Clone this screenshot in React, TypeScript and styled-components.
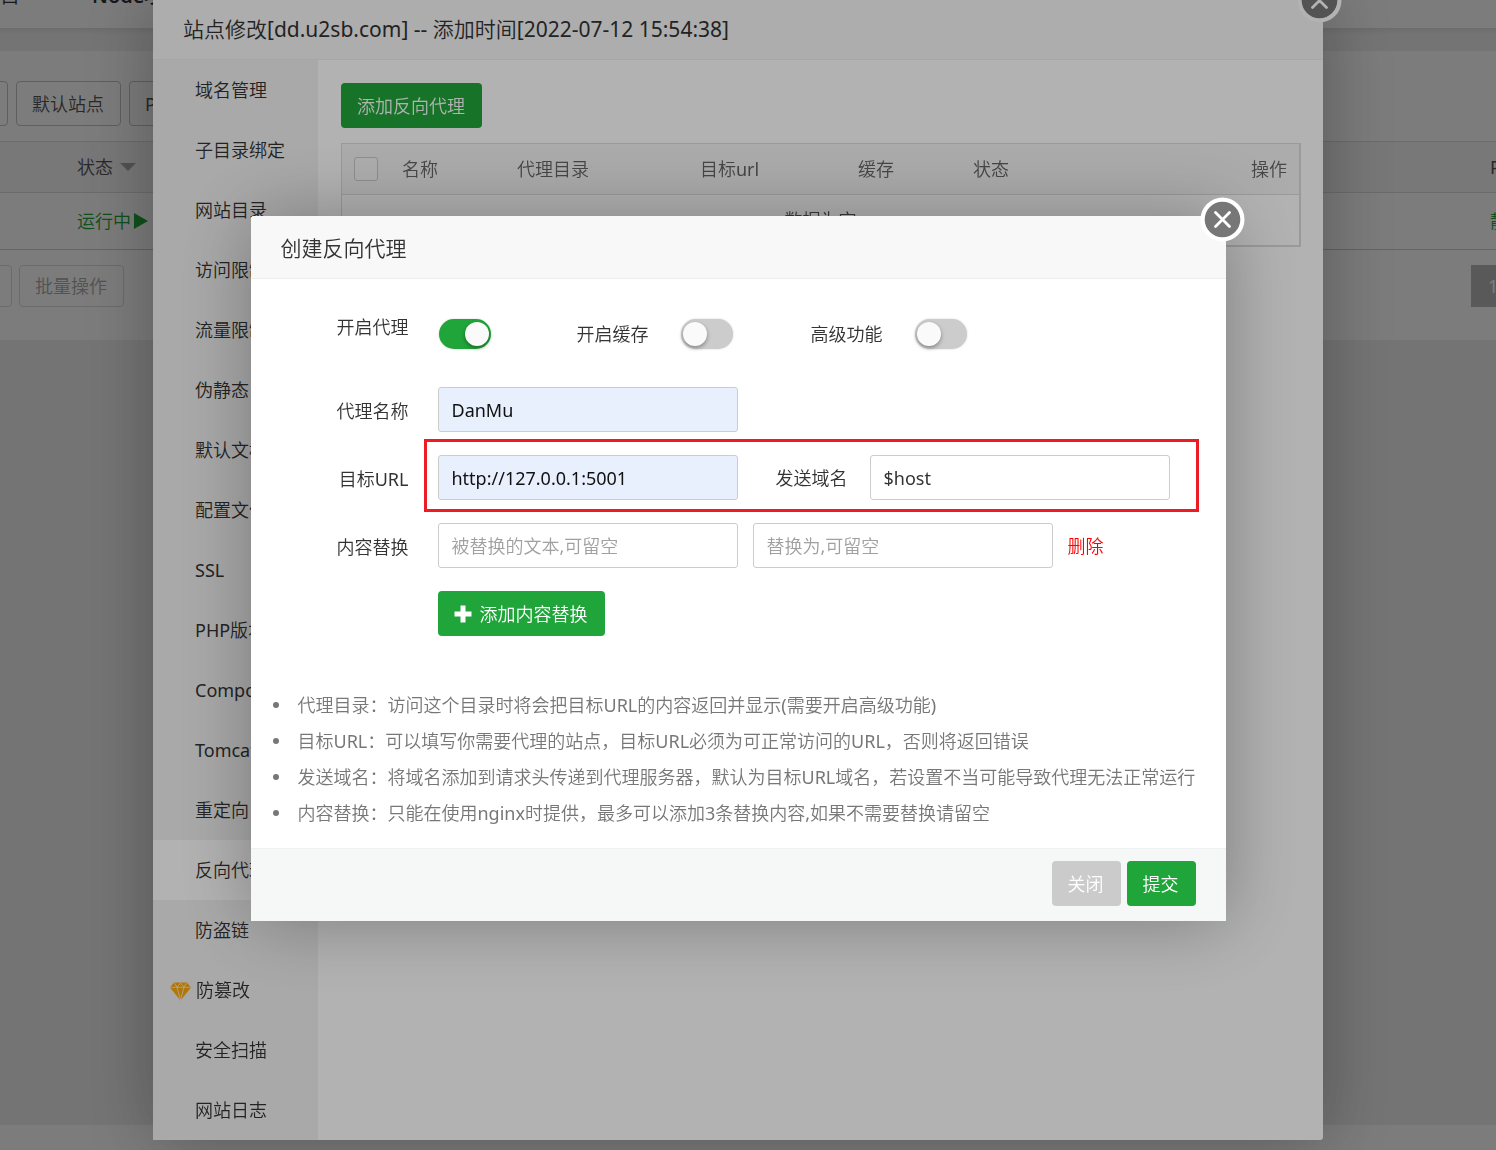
import React, { useState } from 'react';
import styled, { createGlobalStyle, css } from 'styled-components';

const GREEN = '#20a53a';

const GlobalStyle = createGlobalStyle`
  * { box-sizing: border-box; }
  html, body { margin: 0; height: 100%; overflow: hidden; }
  body, button, input, select {
    font-family: 'Noto Sans', 'Noto Sans CJK SC DemiLight', 'Noto Sans CJK SC', sans-serif;
    font-size: 18px;
    line-height: 24px;
    color: #333;
  }
  body { background: #f0f0f0; }
`;

/* ---------- page behind the dialogs ---------- */

const Page = styled.div`
  display: flex;
  flex-direction: column;
  height: calc(100vh + 24px);
  margin: -24px -20px 0 -120px;
`;

const TopBar = styled.header`
  display: flex;
  gap: 72px;
  height: 52px;
  padding: 6px 0 0 61px;
  background: #fff;
  box-shadow: 0 2px 6px rgba(0, 0, 0, 0.1);
  font-size: 20px;
  line-height: 28px;
`;

const TopTab = styled.a<{ $active?: boolean }>`
  color: #333;
  text-decoration: none;
  white-space: nowrap;
  font-weight: ${(p) => (p.$active ? 600 : 400)};
`;

const Panel = styled.main`
  margin-top: 23px;
  padding: 30px 0 33px;
  background: #fff;
`;

const Toolbar = styled.div`
  display: flex;
  gap: 8px;
  padding-left: 5px;
`;

const OutlineButton = styled.button<{ $muted?: boolean }>`
  height: ${(p) => (p.$muted ? 42 : 45)}px;
  padding: 0 16px 0 15px;
  border: 1px solid ${(p) => (p.$muted ? '#ddd' : '#c4c4c4')};
  border-radius: 4px;
  background: #fff;
  color: ${(p) => (p.$muted ? '#aaa' : '#555')};
  white-space: nowrap;
`;

const SiteTable = styled.table`
  width: 100%;
  margin-top: 15px;
  table-layout: fixed;
  border-collapse: collapse;
  white-space: nowrap;

  th, td {
    padding: 0;
    text-align: left;
    font-weight: 400;
    border-bottom: 1px solid #ddd;
  }
  th { height: 51px; background: #f6f6f6; color: #555; border-top: 1px solid #ddd; }
  td { height: 57px; color: ${GREEN}; border-bottom-color: #ccc; }
  th:first-child { width: 197px; }
  th:last-child { width: 26px; }
`;

const SortCaret = styled.span`
  display: inline-block;
  margin-left: 7px;
  vertical-align: 3px;
  border: 8px solid transparent;
  border-top-color: #aaa;
  border-bottom: 0;
`;

const PlayMark = styled.span`
  display: inline-block;
  margin-left: 3px;
  vertical-align: -1px;
  border: 8px solid transparent;
  border-left: 14px solid ${GREEN};
  border-right: 0;
`;

const BatchBar = styled.div`
  display: flex;
  gap: 7px;
  margin-top: 15px;
`;

const BatchSelect = styled.select`
  appearance: none;
  width: 132px;
  height: 42px;
  padding: 0 10px;
  border: 1px solid #ddd;
  border-radius: 4px;
  background: #fff;
  color: #aaa;
`;

const PageNumber = styled.button`
  width: 45px;
  height: 42px;
  margin-left: auto;
  padding: 0 0 0 17px;
  border: 0;
  background: #b8b8b8;
  color: #fff;
  text-align: left;
`;

const PageFooter = styled.footer`
  height: 25px;
  margin-top: auto;
  background: #fff;
`;

/* ---------- dialogs ---------- */

const Overlay = styled.div`
  position: fixed;
  inset: 0;
  display: flex;
  align-items: center;
  justify-content: center;
  padding: 0 20px 13px 0;
  overflow: hidden;
  background: rgba(0, 0, 0, 0.3);
`;

const Dialog = styled.section<{ $width: number }>`
  position: relative;
  flex: none;
  width: ${(p) => p.$width}px;
  border-radius: 3px;
  background: #fff;
  box-shadow: 1px 1px 75px rgba(0, 0, 0, 0.3);
`;

const DialogTitle = styled.h2`
  margin: 0;
  height: 63px;
  padding: 0 30px;
  border-bottom: 1px solid #eee;
  border-radius: 3px 3px 0 0;
  background: #f8f8f8;
  font-size: 21px;
  font-weight: 400;
  line-height: 64px;
`;

const CloseButton = styled.button`
  position: absolute;
  top: -19px;
  right: -19px;
  width: 45px;
  height: 45px;
  padding: 0;
  border: 0;
  border-radius: 50%;
  background: none;

  svg { display: block; }
`;

const DialogClose = () => (
  <CloseButton type="button" aria-label="关闭窗口">
    <svg width="45" height="45" viewBox="0 0 45 45">
      <circle cx="22.5" cy="22.5" r="22" fill="#fff" />
      <circle cx="22.5" cy="22.5" r="17.8" fill="#777" />
      <path d="M15.5 15.5l14 14M29.5 15.5l-14 14" stroke="#fff" strokeWidth="2.8" strokeLinecap="round" />
    </svg>
  </CloseButton>
);

const SiteBody = styled.div`
  display: flex;
`;

const SideMenu = styled.nav`
  flex: none;
  width: 165px;
  background: #f2f2f2;
`;

const SideItem = styled.a<{ $active?: boolean }>`
  display: flex;
  align-items: center;
  height: 60px;
  padding-left: 42px;
  color: #333;
  text-decoration: none;
  ${(p) => p.$active && css`background: #fff;`}

  svg { flex: none; margin: 2px 5px 0 -25px; }
`;

const SiteContent = styled.div`
  flex: 1;
  padding: 23px 22px 0 23px;
`;

const SolidButton = styled.button<{ $gray?: boolean }>`
  display: inline-flex;
  align-items: center;
  gap: 8px;
  height: 45px;
  padding: 0 17px 0 16px;
  border: 0;
  border-radius: 4px;
  background: ${(p) => (p.$gray ? '#cbcbcb' : GREEN)};
  color: #fff;
  white-space: nowrap;
`;

const ProxyTable = styled.table`
  width: 100%;
  margin-top: 15px;
  table-layout: fixed;
  border: 1px solid #ddd;
  border-width: 1px 2px 2px 1px;
  border-spacing: 0;

  th, td { height: 51px; padding: 0 12px; font-weight: 400; color: #666; }
  th { background: #f6f6f6; text-align: left; border-bottom: 1px solid #ddd; }
  td { height: 50px; text-align: center; color: #555; }
`;

const Th = styled.th<{ $w?: number; $end?: boolean }>`
  ${(p) => p.$w && css`width: ${p.$w}px;`}
  && { text-align: ${(p) => (p.$end ? 'right' : 'left')}; }
`;

const TickBox = styled.input`
  appearance: none;
  display: block;
  width: 24px;
  height: 24px;
  margin: 0;
  border: 1px solid #ccc;
  border-radius: 3px;
  background: #fafafa;
`;

/* ---------- proxy form ---------- */

const Form = styled.form`
  padding: 24px 0 17px;
`;

const Row = styled.div<{ $height?: number; $marked?: boolean }>`
  position: relative;
  display: flex;
  align-items: center;
  height: ${(p) => p.$height ?? 45}px;
  margin-bottom: 23px;
  padding-left: 187px;

  ${(p) => p.$marked && css`
    &::after {
      content: '';
      position: absolute;
      inset: -16px 27px -12px 173px;
      border: 3px solid #ed1c24;
      pointer-events: none;
    }
  `}
`;

const FieldLabel = styled.label`
  align-self: flex-start;
  width: 158px;
  margin-left: -187px;
  margin-right: 29px;
  text-align: right;
  line-height: 48px;
`;

const Switches = styled.div`
  display: grid;
  grid-template-columns: 138px 234px auto;
  align-items: center;
  padding-left: 1px;
`;

const SwitchGroup = styled.div`
  display: flex;
  align-items: center;
  gap: 32px;
`;

const Switch = styled.input`
  appearance: none;
  position: relative;
  display: block;
  width: 52px;
  height: 30px;
  margin: 0;
  border-radius: 15px;
  background: #ccc;
  box-shadow: 0 0 2px rgba(0, 0, 0, 0.2);

  &::before {
    content: '';
    position: absolute;
    top: 3px;
    left: 2px;
    width: 24px;
    height: 24px;
    border-radius: 50%;
    background: #fafafa;
    box-shadow: 0 2px 4px rgba(0, 0, 0, 0.35);
  }
  &:checked { background: ${GREEN}; }
  &:checked::before { left: 26px; }
`;

const TextInput = styled.input<{ $filled?: boolean }>`
  width: 300px;
  height: 45px;
  padding: 0 13px;
  border: 1px solid #ccc;
  border-radius: 3px;
  background: ${(p) => (p.$filled ? '#e8f0fe' : '#fff')};
  color: ${(p) => (p.$filled ? '#111' : '#333')};
  outline: 0;

  &::placeholder { color: #a0a0a0; opacity: 1; }
  & + & { margin-left: 15px; }
`;

const InlineLabel = styled.label`
  margin: 0 22px 0 38px;
`;

const DeleteLink = styled.a`
  margin-left: 15px;
  color: #f00;
  text-decoration: none;
`;

const Notes = styled.ul`
  margin: 51px 0 0;
  padding: 0 0 0 22px;
  list-style: none;
  color: #777;
  line-height: 36px;
  white-space: nowrap;
`;

const Note = styled.li`
  display: flex;
  align-items: center;
  gap: 19px;

  &::before {
    content: '';
    width: 6px;
    height: 6px;
    border-radius: 50%;
    background: #777;
  }
`;

const DialogFooter = styled.footer`
  display: flex;
  justify-content: flex-end;
  gap: 6px;
  padding: 12px 30px 15px;
  border-top: 1px solid #edf1f2;
  background: #f6f8f8;
`;

const GemIcon = () => (
  <svg width="21" height="19" viewBox="0 0 21 19">
    <path d="M4 0.5h13l4 5L10.5 18.5 0 5.5z" fill="#ffaa0a" />
    <path d="M0.5 5.3h20M7 5.3L10.5 18 14 5.3M4.5 1l2.5 4.3L10.5 1 14 5.3 16.5 1" fill="none" stroke="#f2f2f2" strokeWidth="0.8" />
  </svg>
);

const PlusIcon = () => (
  <svg width="18" height="18" viewBox="0 0 18 18">
    <path d="M6.5 0.5h5v6h6v5h-6v6h-5v-6h-6v-5h6z" fill="#fff" />
  </svg>
);

const menu = [
  '域名管理', '子目录绑定', '网站目录', '访问限制', '流量限制', '伪静态',
  '默认文档', '配置文件', 'SSL', 'PHP版本', 'Composer', 'Tomcat', '重定向',
  '反向代理', '防盗链', '防篡改', '安全扫描', '网站日志',
];

const notes = [
  '代理目录：访问这个目录时将会把目标URL的内容返回并显示(需要开启高级功能)',
  '目标URL：可以填写你需要代理的站点，目标URL必须为可正常访问的URL，否则将返回错误',
  '发送域名：将域名添加到请求头传递到代理服务器，默认为目标URL域名，若设置不当可能导致代理无法正常运行',
  '内容替换：只能在使用nginx时提供，最多可以添加3条替换内容,如果不需要替换请留空',
];

const SitesPage = () => (
  <Page>
    <TopBar>
      <TopTab href="#php">PHP项目</TopTab>
      <TopTab href="#node" $active>Node项目</TopTab>
    </TopBar>
    <Panel>
      <Toolbar>
        <OutlineButton type="button">修改默认页</OutlineButton>
        <OutlineButton type="button">默认站点</OutlineButton>
        <OutlineButton type="button">PHP命令行版本</OutlineButton>
      </Toolbar>
      <SiteTable>
        <thead>
          <tr><th /><th>状态<SortCaret /></th><th>PHP</th></tr>
        </thead>
        <tbody>
          <tr><td /><td>运行中<PlayMark /></td><td>静态</td></tr>
        </tbody>
      </SiteTable>
      <BatchBar>
        <BatchSelect aria-label="批量操作"><option>请选择</option></BatchSelect>
        <OutlineButton type="button" $muted>批量操作</OutlineButton>
        <PageNumber type="button">1</PageNumber>
      </BatchBar>
    </Panel>
    <PageFooter />
  </Page>
);

const SiteDialog = () => (
  <Overlay>
    <Dialog $width={1170}>
      <DialogTitle>站点修改[dd.u2sb.com] -- 添加时间[2022-07-12 15:54:38]</DialogTitle>
      <SiteBody>
        <SideMenu>
          {menu.map((name) => (
            <SideItem key={name} href="#site" $active={name === '反向代理'}>
              {name === '防篡改' && <GemIcon />}
              {name}
            </SideItem>
          ))}
        </SideMenu>
        <SiteContent>
          <SolidButton type="button">添加反向代理</SolidButton>
          <ProxyTable>
            <thead>
              <tr>
                <Th $w={48}><TickBox type="checkbox" aria-label="全选" /></Th>
                <Th $w={115}>名称</Th>
                <Th $w={183}>代理目录</Th>
                <Th $w={158}>目标url</Th>
                <Th $w={115}>缓存</Th>
                <Th $w={115}>状态</Th>
                <Th $end>操作</Th>
              </tr>
            </thead>
            <tbody>
              <tr><td colSpan={7}>数据为空</td></tr>
            </tbody>
          </ProxyTable>
        </SiteContent>
      </SiteBody>
      <DialogClose />
    </Dialog>
  </Overlay>
);

const ProxyDialog = () => {
  const [on, setOn] = useState({ proxy: true, cache: false, advanced: false });
  const toggle = (key: keyof typeof on) => () => setOn({ ...on, [key]: !on[key] });

  return (
    <Overlay>
      <Dialog $width={975}>
        <DialogTitle>创建反向代理</DialogTitle>
        <Form onSubmit={(e) => e.preventDefault()}>
          <Row $height={61}>
            <FieldLabel htmlFor="proxy">开启代理</FieldLabel>
            <Switches>
              <Switch id="proxy" type="checkbox" checked={on.proxy} onChange={toggle('proxy')} />
              <SwitchGroup>
                <label htmlFor="cache">开启缓存</label>
                <Switch id="cache" type="checkbox" checked={on.cache} onChange={toggle('cache')} />
              </SwitchGroup>
              <SwitchGroup>
                <label htmlFor="advanced">高级功能</label>
                <Switch id="advanced" type="checkbox" checked={on.advanced} onChange={toggle('advanced')} />
              </SwitchGroup>
            </Switches>
          </Row>
          <Row>
            <FieldLabel htmlFor="name">代理名称</FieldLabel>
            <TextInput id="name" $filled defaultValue="DanMu" />
          </Row>
          <Row $marked>
            <FieldLabel htmlFor="target">目标URL</FieldLabel>
            <TextInput id="target" $filled defaultValue="http://127.0.0.1:5001" />
            <InlineLabel htmlFor="host">发送域名</InlineLabel>
            <TextInput id="host" defaultValue="$host" />
          </Row>
          <Row>
            <FieldLabel htmlFor="from">内容替换</FieldLabel>
            <TextInput id="from" placeholder="被替换的文本,可留空" />
            <TextInput aria-label="替换为" placeholder="替换为,可留空" />
            <DeleteLink href="#delete">删除</DeleteLink>
          </Row>
          <Row>
            <SolidButton type="button"><PlusIcon />添加内容替换</SolidButton>
          </Row>
          <Notes>
            {notes.map((note) => <Note key={note}>{note}</Note>)}
          </Notes>
        </Form>
        <DialogFooter>
          <SolidButton type="button" $gray>关闭</SolidButton>
          <SolidButton type="button">提交</SolidButton>
        </DialogFooter>
        <DialogClose />
      </Dialog>
    </Overlay>
  );
};

export default function App() {
  return (
    <>
      <GlobalStyle />
      <SitesPage />
      <SiteDialog />
      <ProxyDialog />
    </>
  );
}
